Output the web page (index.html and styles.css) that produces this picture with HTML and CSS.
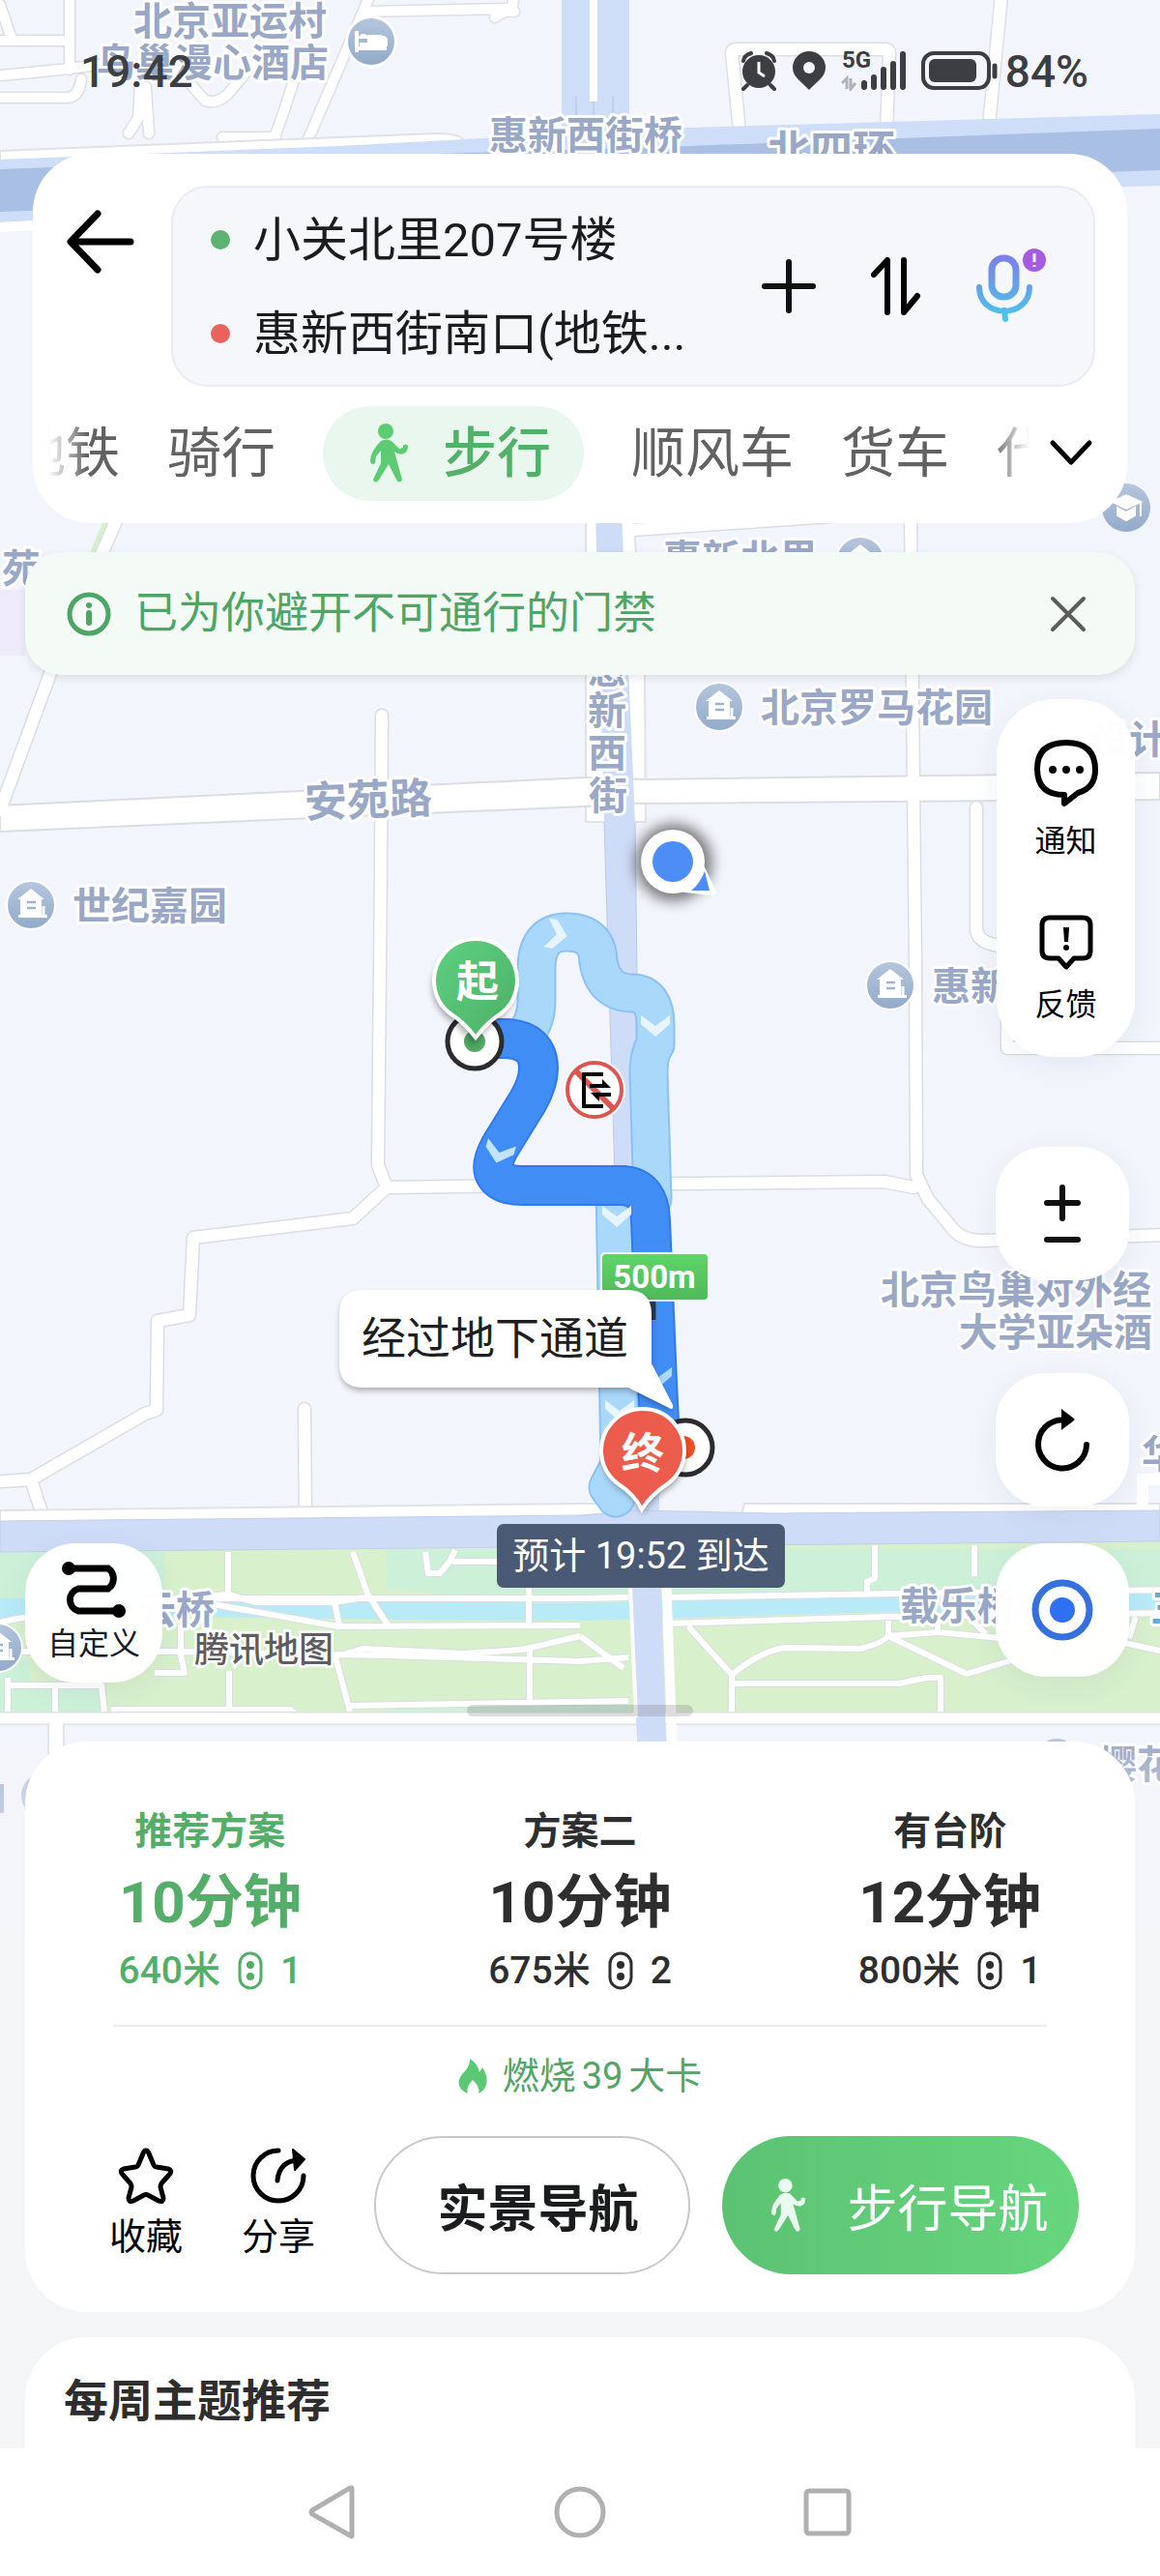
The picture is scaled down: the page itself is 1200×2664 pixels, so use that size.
FILE: index.html
```html
<!DOCTYPE html>
<html lang="zh-CN">
<head>
<meta charset="utf-8">
<meta name="viewport" content="width=device-width, initial-scale=1">
<title>步行导航</title>
<link rel="stylesheet" href="styles.css">
</head>
<body>
<div class="screen">

<svg class="map" viewBox="0 0 1200 2000" preserveAspectRatio="xMidYMin slice" role="img" aria-label="地图">
  <defs>
    <linearGradient id="poi" x1="0" y1="0" x2="0" y2="1"><stop offset="0" stop-color="#b5c5dc"/><stop offset="1" stop-color="#93abc9"/></linearGradient>
    <linearGradient id="pinGreen" x1="0" y1="0" x2="1" y2="1"><stop offset="0" stop-color="#5fd080"/><stop offset="1" stop-color="#4bb067"/></linearGradient>
    <linearGradient id="sign" x1="0" y1="0" x2="0" y2="1"><stop offset="0" stop-color="#5fd568"/><stop offset="1" stop-color="#4fb95a"/></linearGradient>
    <linearGradient id="fade" x1="0" y1="0" x2="0" y2="1"><stop offset="0" stop-color="#f4f5f7" stop-opacity="0"/><stop offset="1" stop-color="#f4f5f7"/></linearGradient>
    <filter id="soft" x="-50%" y="-50%" width="200%" height="200%"><feGaussianBlur stdDeviation="7"/></filter>
    <filter id="soft2" x="-50%" y="-50%" width="200%" height="200%"><feGaussianBlur stdDeviation="3"/></filter>
    <g id="house">
      <circle r="26" fill="#fff"/><circle r="24" fill="url(#poi)"/>
      <path d="M0-17 14-6H11V10H17V13H-13V10H-11V-6H-14Z" fill="#fff"/>
      <path d="M-4-3H5M-4 3H5" stroke="#9fb2cd" stroke-width="2.500"/>
      <path d="M13 1V10" stroke="#fff" stroke-width="3"/>
    </g>
    <g id="chev"><path d="M-15-9 0 2 15-9V0L0 13-15 0Z"/></g>
    <g id="roads" fill="none" stroke-linecap="round" stroke-linejoin="round">
      <path d="M385-10 312 160M378 12 525 9Q532 8 531-5M512 18Q522 10 532 12"/>
      <path d="M0 42H72M72-5V72M0 78Q50 74 110 66M0 101H70Q82 100 84 82M0 5 12 40M145 88 143 122 133 138M151 90 154 138M182 70Q200 90 212 104Q224 108 235 98L262 66M305 80 292 120 284 142M230 142H285"/>
    </g>
    <g id="streets" fill="none" stroke-linecap="round" stroke-linejoin="round">
      <path d="M124 530 58 680 0 838M395 740 394 900 391 1205 400 1228 365 1260 200 1280 196 1360 163 1366 162 1458 150 1462 32 1530 45 1570M-10 1533 32 1530M400 1228 700 1224 915 1222 945 1228"/>
      <path d="M315 1457 316 1570M942 530 945 815 947 1000 948 1215 960 1240 985 1270Q995 1283 1015 1283L1210 1277M1010 835V960Q1010 975 1035 978M1042 1055V1084L1210 1084M655 548 860 534"/>
    </g>
    <g id="paths" fill="none" stroke-linejoin="round">
      <path d="M0 1678Q30 1670 60 1672L160 1655Q170 1654 186 1653L350 1682 600 1681M-5 1708H186L400 1712 600 1718 650 1714M170 1660 185 1664 187 1652 236 1649 265 1657 345 1657 376 1652M236 1605V1648M365 1605 380 1648 402 1682M346 1657 351 1680M440 1605 443 1627 455 1627 465 1615 471 1603M468 1615H520M547 1640V1680M187 1680V1712L191 1730H160M346 1710 362 1770M352 1712 375 1705 480 1710 540 1706 600 1692M237 1728V1770M362 1764 650 1759M548 1706V1764M8 1735V1770M8 1743H105L108 1770M57 1743V1770M115 1768 300 1768 308 1774"/>
      <path d="M186 1653 600 1653 650 1652M690 1652 930 1648 1210 1644M690 1679 920 1672 1210 1668M905 1598V1632L897 1636V1646M1008 1598V1630M712 1682 757 1732V1772M757 1732Q790 1705 815 1704L890 1705Q918 1698 919 1690V1676M919 1692 1000 1731 1050 1716M919 1692 970 1688 1035 1694M970 1675V1688M1008 1678 1020 1690M757 1741H930L958 1735H973V1772M1140 1694 1200 1707M1168 1694 1175 1672M600 1692 645 1725"/>
    </g>
    <path id="alternative" d="M538 1075Q555 1060 555 1035V1000Q556 964 586 964 618 964 619 994 624 1027 655 1027 678 1028 678 1060V1080Q671 1090 671 1110L675 1240M636 1226 641 1515 629 1538 637 1549"/>
    <path id="selected" d="M491 1074H524Q557 1076 557 1105 557 1120 546 1139L517 1186Q506 1206 513 1216 520 1226 540 1226H645Q672 1228 673 1262L680 1430 683 1490"/>
  </defs>

  <rect width="1200" height="2000" fill="#f2f5fb"/>
  <rect x="0" y="610" width="26" height="68" fill="#efebfb"/>

  <!-- upper district and ring road -->
  <use href="#roads" stroke="#dcdfe4" stroke-width="13"/><use href="#roads" stroke="#fff" stroke-width="10"/>
  <path d="M765 135 757 55Q757 50 765 51H915Q921 51 920 57L917 135M1036-5 1023 130" fill="none" stroke="#dcdfe4" stroke-width="15"/>
  <path d="M765 135 757 55Q757 50 765 51H915Q921 51 920 57L917 135M1036-5 1023 130" fill="none" stroke="#fff" stroke-width="12"/>
  <path d="M581 0H651V150H581Z" fill="#cfdef8"/><path d="M614 0V105" stroke="#fff" stroke-width="8"/><path d="M596 100V140M634 100V140M614 105V140" stroke="#b5cbf1" stroke-width="1.500"/>
  <path d="M0 156 300 144 450 138Q478 138 480 146V170H0Z" fill="#fff" stroke="#dfe2e6" stroke-width="2"/>
  <path d="M0 165 350 151 712 132 1200 118V192L0 230Z" fill="#cfdef8"/>
  <path d="M0 175 350 162 712 151 1200 133V176L0 219Z" fill="#a9bfe3"/>
  <path d="M0 235 34 233" stroke="#fff" stroke-width="10"/>

  <!-- streets -->
  <path d="M114 530 50 680" stroke="#d5f0cf" stroke-width="6"/>
  <use href="#streets" stroke="#dadee2" stroke-width="15"/>
  <path d="M606 530H655L667 700 668 850H606Z" fill="#fff" stroke="#dfe2e6" stroke-width="2"/>
  <path d="M0 833 606 804 670 806 1200 799V827L660 831 606 834 0 860Z" fill="#fff" stroke="#dadee2" stroke-width="2"/>
  <use href="#streets" stroke="#fff" stroke-width="12"/>
  <path d="M616 530H643L657 850 662 1250 682 1540V1600H648L625 850Z" fill="#cfdcf7"/>
  <path d="M625 850 637 1250M657 850 662 1250" stroke="#b9c9e4" stroke-width="1"/>

  <!-- southern road, park and canal -->
  <path d="M0 1562 600 1555 650 1555V1575H0ZM770 1555H1200V1575H765Z" fill="#fff" stroke="#dfe2e6" stroke-width="2"/>
  <path d="M1182 1565V1530H1210" fill="none" stroke="#fff" stroke-width="12"/>
  <path d="M0 1602 1200 1594V1776H0Z" fill="#d8f0cc"/>
  <path d="M0 1602H170V1650L0 1668ZM400 1602H1200V1644L690 1650H470L400 1642ZM0 1715H30V1742H110V1776H0ZM400 1764H650V1776H400Z" fill="#ccf0d8"/>
  <path d="M0 1653 170 1654 350 1656 600 1658 920 1648 1200 1643V1664L920 1667 600 1676 420 1675 190 1672 0 1674Z" fill="#b8eaf8"/>
  <use href="#paths" stroke="#dcdde3" stroke-width="8"/><use href="#paths" stroke="#fff" stroke-width="6"/>
  <path d="M0 1573 600 1567 660 1562 800 1565 1200 1562V1594L0 1605Z" fill="#cfdcf7" stroke="#c3cfe6" stroke-width="1"/>
  <path d="M0 1777H1200" stroke="#dfe0e4" stroke-width="14"/><path d="M0 1777H1200" stroke="#fff" stroke-width="11"/>
  <path d="M58 1782V1830" stroke="#fff" stroke-width="14"/><path d="M50 1783V1830M66 1783V1830" stroke="#dcdfe4" stroke-width="1.500"/>
  <path d="M650 1600H682L690 1820H660Z" fill="#cfdcf7"/>
  <path d="M688 1600 696 1820" stroke="#fff" stroke-width="10"/><path d="M652 1640 658 1776" stroke="#fff" stroke-width="4"/>

  <!-- place labels -->
  <g class="places">
    <text x="138" y="36">北京亚运村</text><text x="100" y="79">鸟巢漫心酒店</text>
    <text x="506" y="154">惠新西街桥</text><text class="large" x="794" y="172">北四环</text>
    <text x="2" y="602">苑</text><text x="686" y="592">惠新北里</text>
    <text x="608" y="706">惠</text><text x="608" y="749">新</text><text x="608" y="793">西</text><text x="609" y="837">街</text>
    <text x="787" y="746">北京罗马花园</text><text x="1128" y="779">设计</text>
    <text class="large" x="315" y="843" transform="rotate(-2 380 828)">安苑路</text>
    <text x="75" y="951">世纪嘉园</text><text x="964" y="1034">惠新</text>
    <text x="911" y="1348">北京鸟巢对外经</text><text x="992" y="1392">大学亚朵酒</text>
    <text x="1181" y="1518">华</text><text x="142" y="1679">云桥</text><text x="931" y="1675">载乐桥</text>
    <text class="water" x="1190" y="1677">三</text>
    <text x="1136" y="1839">樱花</text>
  </g>
  <g transform="translate(384 43)"><circle r="27" fill="#fff"/><circle r="24" fill="url(#poi)"/><path d="M-15-11V11M-15 7H16M-11-3A3 3 0 1 1-5-3M-12 3H15V-2Q15-5 4-5H-2V3" fill="#fff" stroke="#fff" stroke-width="4"/></g>
  <g transform="translate(1165 525)"><circle r="25" fill="url(#poi)"/><path d="M-14-6 0-13 15-6 0 1ZM-9 0 0 5 9 0V8L0 13-9 8ZM15-5V9" fill="#fff" stroke="#fff" stroke-width="2"/></g>
  <use href="#house" x="890" y="580"/><use href="#house" x="744" y="731"/><use href="#house" x="32" y="936"/><use href="#house" x="921" y="1019"/>
  <use href="#house" x="-2" y="1704"/><circle cx="1093" cy="1819" r="21" fill="#b5c2dc"/><circle cx="45" cy="1857" r="23" fill="#b5c2dc"/><path d="M0 1845H4V1875H0" fill="#a6b4d2"/>
  <rect y="1790" width="1200" height="210" fill="url(#fade)"/>

  <!-- current position -->
  <circle cx="697" cy="892" r="40" fill="#000" opacity=".5" filter="url(#soft)"/>
  <path d="M728 895 741 922Q742 926 737 926L700 922Z" fill="#fff"/>
  <circle cx="696" cy="891" r="33" fill="#fff"/><circle cx="696" cy="891" r="21" fill="#4d8df6"/><path d="M729 901 734 921H715Q724 914 729 901Z" fill="#4d8df6"/>

  <!-- alternative and selected routes -->
  <g fill="none" stroke-linecap="round" stroke-linejoin="round">
    <use href="#alternative" stroke="#8dc1f5" stroke-width="41"/><use href="#alternative" stroke="#a9d8fa" stroke-width="37"/>
    <use href="#selected" stroke="#3379ee" stroke-width="42"/><use href="#selected" stroke="#418df6" stroke-width="38"/>
  </g>
  <g fill="#e9f5fe">
    <use href="#chev" transform="translate(574 966) rotate(-80)"/><use href="#chev" transform="translate(678 1059)"/><use href="#chev" transform="translate(638 1256)"/><use href="#chev" transform="translate(641 1457)"/>
    <use href="#chev" fill="#c2e4fc" transform="translate(517 1190) rotate(16)"/><use href="#chev" fill="#a9d8fa" transform="translate(680 1423)"/>
  </g>

  <circle cx="491" cy="1077" r="28" fill="#fff" stroke="#2c2c2e" stroke-width="5"/><circle cx="491" cy="1077" r="11" fill="#51a963"/>
  <circle cx="709" cy="1497" r="28" fill="#fff" stroke="#2c2c2e" stroke-width="5"/><circle cx="707" cy="1497" r="12" fill="#ea4f25"/>
  <circle cx="615" cy="1127" r="32" fill="#fff"/><circle cx="615" cy="1127" r="28" fill="#fff" stroke="#df5450" stroke-width="4"/><path d="M596 1108 634 1146" stroke="#df5450" stroke-width="6"/>
  <path d="M624 1111H604V1144H624" fill="none" stroke="#000" stroke-width="4"/><path d="M610 1121H623V1116L632 1125H610ZM632 1130H611L620 1139V1134H632Z"/>

  <!-- distance sign -->
  <path d="M675 1340V1365" stroke="#27384f" stroke-width="7"/><path d="M685 1361H724" stroke="#000" stroke-width="7" opacity=".25" filter="url(#soft2)"/>
  <rect x="621" y="1295" width="112" height="51" rx="5" fill="#eafcec"/><rect x="623" y="1297" width="109" height="47" rx="4" fill="url(#sign)"/>
  <text class="sign-text" x="677" y="1332">500m</text>

  <!-- underpass note -->
  <path d="M376 1338H648Q674 1338 674 1360V1415L696 1460 650 1438H376Q352 1438 352 1414V1362Q352 1338 376 1338Z" opacity=".3" filter="url(#soft2)"/>
  <path d="M375 1334H649Q674 1334 674 1359V1410L696 1453Q697 1459 692 1456L650 1435H375Q351 1435 351 1410V1359Q351 1334 375 1334Z" fill="#fff"/>
  <text class="note" x="512" y="1400">经过地下通道</text>

  <!-- start and finish pins -->
  <path d="M492 1076C486 1068 478 1058 467 1050A43 43 0 1 1 517 1050C506 1058 498 1068 492 1076Z" opacity=".3" transform="translate(-2 5)" filter="url(#soft2)"/>
  <path d="M492 1073C486 1065 478 1056 467 1049A43 43 0 1 1 517 1049C506 1056 498 1065 492 1073Z" fill="url(#pinGreen)" stroke="#fff" stroke-width="4"/>
  <text class="pin-text" x="494" y="1031">起</text>
  <path d="M664 1562C659 1552 651 1543 640 1536A43 43 0 1 1 690 1536C679 1543 670 1552 664 1562Z" opacity=".35" transform="translate(1 4)" filter="url(#soft2)"/>
  <path d="M664 1561C659 1551 651 1542 640 1535A43 43 0 1 1 690 1535C679 1542 670 1551 664 1561Z" fill="#eb5c4d" stroke="#fff" stroke-width="4"/>
  <text class="pin-text" x="665" y="1519">终</text>

  <rect x="514" y="1576" width="298" height="66" rx="7" fill="#4a5974"/>
  <text class="eta" x="663" y="1622">预计 19:52 到达</text>
</svg>

<header class="status">
  <time>19:42</time>
  <div class="status-icons">
    <svg width="38" height="42" viewBox="0 0 38 42" fill="#3c3e42"><circle cx="19" cy="22" r="17"/><path d="M3 11Q4 5 11 3M27 3Q34 5 35 11M7 36 3 40M31 36 35 40" fill="none" stroke="#3c3e42" stroke-width="4" stroke-linecap="round"/><path d="M19 12V23L25 27" fill="none" stroke="#fff" stroke-width="3"/></svg>
    <svg width="36" height="42" viewBox="0 0 36 42"><path d="M18 1A17 17 0 0 1 35 18C35 28 25 33 18 41 11 33 1 28 1 18A17 17 0 0 1 18 1Z" fill="#3c3e42"/><circle cx="18" cy="18" r="6" fill="#f2f5fb"/></svg>
    <svg width="68" height="42" viewBox="0 0 68 42"><text class="signal" x="1" y="18">5G</text><g stroke="#3c3e42" stroke-width="6" stroke-linecap="round"><path d="M24 34V38M34 28V38M44 20V38M54 14V38M64 4V38"/></g><path d="M1 34 6 29V40M10 29V40L15 34" fill="none" stroke="#aeb2b8" stroke-width="3"/></svg>
    <svg width="80" height="42" viewBox="0 0 80 42"><rect x="2" y="3" width="68" height="36" rx="11" fill="none" stroke="#3c3e42" stroke-width="4"/><rect x="8" y="9" width="49" height="24" rx="6" fill="#3c3e42"/><path d="M76 16V27" stroke="#3c3e42" stroke-width="5" stroke-linecap="round"/></svg>
    <span>84%</span>
  </div>
</header>

<section class="search-card">
  <div class="search-row">
    <button class="back" aria-label="返回"><svg width="70" height="66" viewBox="0 0 70 66"><path d="M32 4 4 33 32 62M5 33H66" fill="none" stroke="#000" stroke-width="7" stroke-linecap="round" stroke-linejoin="round"/></svg></button>
    <div class="route-box">
      <div class="fields">
        <label class="field"><i class="dot start"></i><input aria-label="起点" value="小关北里207号楼"></label>
        <label class="field"><i class="dot end"></i><input aria-label="终点" value="惠新西街南口(地铁..."></label>
      </div>
      <div class="tools">
        <button aria-label="添加途经点"><svg width="58" height="72" viewBox="0 0 58 72"><path d="M4 36H54M29 11V61" stroke="#111" stroke-width="6" stroke-linecap="round"/></svg></button>
        <button aria-label="交换起终点"><svg width="52" height="72" viewBox="0 0 52 72"><path d="M3 24 17 9V63M34 9V63L48 46" fill="none" stroke="#000" stroke-width="6" stroke-linecap="round" stroke-linejoin="round"/></svg></button>
        <button aria-label="语音输入"><svg width="76" height="80" viewBox="0 0 76 80"><defs><linearGradient id="mic" gradientUnits="userSpaceOnUse" x1="30" y1="8" x2="30" y2="76"><stop offset="0" stop-color="#7f7fea"/><stop offset="1" stop-color="#48c8ea"/></linearGradient></defs><rect x="17" y="11" width="25" height="40" rx="12" fill="none" stroke="url(#mic)" stroke-width="7"/><path d="M4 41C4 74 56 74 56 41M30 65 31 74" fill="none" stroke="url(#mic)" stroke-width="6" stroke-linecap="round"/><circle cx="61" cy="13" r="12" fill="#a65ce0"/><path d="M61 6V15M61 18V20" stroke="#fff" stroke-width="3"/></svg></button>
      </div>
    </div>
  </div>
  <nav class="modes" aria-label="出行方式">
    <div class="mode-scroller"><div class="mode-list">
      <button>地铁</button><button>骑行</button>
      <button class="active" aria-current="true"><svg width="42" height="62" viewBox="0 0 42 62"><use href="#walker"/></svg>步行</button>
      <button>顺风车</button><button>货车</button><button>代驾</button>
    </div></div>
    <button class="more" aria-label="更多"><svg width="46" height="30" viewBox="0 0 46 30"><path d="M4 4 23 24 42 4" fill="none" stroke="#000" stroke-width="5" stroke-linecap="round" stroke-linejoin="round"/></svg></button>
  </nav>
</section>

<svg class="sprite" aria-hidden="true"><symbol id="walker" viewBox="0 0 42 62"><circle cx="17" cy="8" r="8"/><path d="M12 18Q20 14 25 20L31 26 35 25V23Q37 20 40 23 40 29 36 31 31 33 26 29L29 40 34 58Q31 63 28 58L20 42 10 58Q6 63 4 58L12 41V28L7 34 6 41Q2 44 1 39 1 29 12 18Z"/></symbol></svg>

<section class="toast" role="status">
  <svg width="46" height="46" viewBox="0 0 46 46"><circle cx="23" cy="23" r="20" fill="none" stroke="#4da566" stroke-width="5"/><circle cx="23" cy="14" r="3" fill="#4da566"/><path d="M23 22V32" stroke="#4da566" stroke-width="6" stroke-linecap="round"/></svg>
  <p>已为你避开不可通行的门禁</p>
  <button aria-label="关闭"><svg width="38" height="38" viewBox="0 0 38 38"><path d="M3 3 35 35M35 3 3 35" stroke="#5a5d5b" stroke-width="4" stroke-linecap="round"/></svg></button>
</section>

<main class="controls">
  <div class="left-tools">
    <button class="tile custom"><svg width="68" height="60" viewBox="0 0 68 60"><path d="M10 8H49A13 13 0 0 1 49 29H18A12 12 0 0 0 18 52H58" fill="none" stroke="#000" stroke-width="7"/><circle cx="8" cy="8" r="7"/><circle cx="60" cy="52" r="7"/></svg><span>自定义</span></button>
    <span class="brand">腾讯地图</span>
  </div>
  <div class="right-tools">
    <div class="panel">
      <button><svg width="68" height="72" viewBox="0 0 68 72"><path d="M34 4Q64 4 64 32 64 51 46 56L32 67V58Q4 58 4 31 4 4 34 4Z" fill="none" stroke="#000" stroke-width="6" stroke-linejoin="round"/><circle cx="20" cy="32" r="4"/><circle cx="34" cy="32" r="4"/><circle cx="48" cy="32" r="4"/></svg><span>通知</span></button>
      <button><svg width="60" height="60" viewBox="0 0 60 60"><path d="M13 4H47Q55 4 55 12V38Q55 46 47 46H38L30 55 22 46H13Q5 46 5 38V12Q5 4 13 4Z" fill="none" stroke="#000" stroke-width="5" stroke-linejoin="round"/><path d="M27 14H33L32 29H28Z"/><circle cx="30" cy="35" r="3"/></svg><span>反馈</span></button>
    </div>
    <button class="tile zoom" aria-label="缩放"><svg width="44" height="66" viewBox="0 0 44 66"><path d="M6 22H38M22 6V38M6 60H38" stroke="#111" stroke-width="6" stroke-linecap="round"/></svg></button>
    <button class="tile refresh" aria-label="刷新"><svg width="62" height="72" viewBox="0 0 62 72"><path d="M36 16A25 25 0 1 0 56 41" fill="none" stroke="#000" stroke-width="6" stroke-linecap="round"/><path d="M30 4 43 14Q44 15 43 16L30 26Z"/></svg></button>
    <button class="tile" aria-label="定位"><svg width="66" height="66" viewBox="0 0 66 66"><circle cx="33" cy="33" r="28" fill="none" stroke="#3670df" stroke-width="7"/><circle cx="33" cy="33" r="13" fill="#2f6ff2"/></svg></button>
  </div>
</main>

<div class="handle"></div>

<section class="sheet">
  <div class="plans">
    <button class="plan chosen"><span class="plan-name">推荐方案</span><strong>10分钟</strong><span class="plan-meta">640米<svg width="26" height="40" viewBox="0 0 26 40"><rect x="2" y="2" width="22" height="36" rx="11" fill="none" stroke="currentColor" stroke-width="3"/><circle cx="13" cy="14" r="4"/><circle cx="13" cy="26" r="4"/></svg>1</span></button>
    <button class="plan"><span class="plan-name">方案二</span><strong>10分钟</strong><span class="plan-meta">675米<svg width="26" height="40" viewBox="0 0 26 40"><rect x="2" y="2" width="22" height="36" rx="11" fill="none" stroke="currentColor" stroke-width="3"/><circle cx="13" cy="14" r="4"/><circle cx="13" cy="26" r="4"/></svg>2</span></button>
    <button class="plan"><span class="plan-name">有台阶</span><strong>12分钟</strong><span class="plan-meta">800米<svg width="26" height="40" viewBox="0 0 26 40"><rect x="2" y="2" width="22" height="36" rx="11" fill="none" stroke="currentColor" stroke-width="3"/><circle cx="13" cy="14" r="4"/><circle cx="13" cy="26" r="4"/></svg>1</span></button>
  </div>
  <hr>
  <p class="calories"><svg width="30" height="38" viewBox="0 0 30 38"><path d="M12 1C19 6 21 10 22 15L25 10C33 22 30 33 21 37 23 32 19 27 15 23 11 27 8 32 10 37 -2 33-1 22 5 16 9 12 12 8 12 1Z" fill="#5cc774"/></svg><span>燃烧<b>39</b>大卡</span></p>
  <div class="actions">
    <button class="small-action"><svg width="60" height="60" viewBox="0 0 60 60"><path d="M30 4Q32 4 33 7L38 19Q39 21 41 21L53 23Q58 25 54 29L46 38Q45 40 45 42L48 53Q48 58 43 56L32 50Q30 49 28 50L17 56Q12 58 12 53L15 42Q15 40 14 38L6 29Q2 25 7 23L19 21Q21 21 22 19L27 7Q28 4 30 4Z" fill="none" stroke="#000" stroke-width="5"/></svg><span>收藏</span></button>
    <button class="small-action"><svg width="60" height="60" viewBox="0 0 60 60"><path d="M30 4A26 26 0 1 0 56 30M29 35C30 22 38 14 51 14" fill="none" stroke="#000" stroke-width="5" stroke-linecap="round"/><path d="M45 3 57 13 47 24Z" stroke="#000" stroke-width="2" stroke-linejoin="round"/></svg><span>分享</span></button>
    <button class="live">实景导航</button>
    <button class="go"><svg width="38" height="58" viewBox="0 0 42 62"><use href="#walker"/></svg>步行导航</button>
  </div>
</section>

<section class="weekly"><h2>每周主题推荐</h2></section>

<nav class="system-nav" aria-label="系统导航">
  <button aria-label="后退"><svg width="54" height="60" viewBox="0 0 54 60"><path d="M47 6V54Q47 56 45 54L6 32Q4 30 6 28L45 5Q47 4 47 6Z"/></svg></button>
  <button aria-label="主页"><svg width="54" height="60" viewBox="0 0 54 60"><circle cx="27" cy="30" r="24"/></svg></button>
  <button aria-label="最近任务"><svg width="54" height="60" viewBox="0 0 54 60"><rect x="5" y="8" width="44" height="44" rx="3"/></svg></button>
</nav>
</div>
</body>
</html>
```

FILE: styles.css
```css
* { box-sizing: border-box; }

body {
  margin: 0;
  background: #f4f5f7;
  color: #1b1c1e;
  font-family: Roboto, "Noto Sans CJK SC", sans-serif;
}

button, input {
  margin: 0;
  padding: 0;
  border: 0;
  background: none;
  color: inherit;
  font: inherit;
}

svg { display: block; flex: none; }
p, h2 { margin: 0; }

.screen {
  position: relative;
  display: flex;
  flex-direction: column;
  min-height: 100vh;
  overflow: hidden;
}

/* The map lies behind all the floating controls. */
.map {
  position: absolute;
  top: 0;
  left: 0;
  width: 100%;
  height: 2000px;
}

.screen > :not(.map) { position: relative; }
.screen > .sprite { position: absolute; width: 0; height: 0; }

.places text {
  fill: #9aa8c6;
  stroke: #fff;
  stroke-width: 6px;
  stroke-linejoin: round;
  paint-order: stroke;
  font-family: "Noto Sans CJK SC", sans-serif;
  font-size: 40px;
  font-weight: 700;
}
.places .large { font-size: 44px; }
.places .water { fill: #6aa9cc; }

.sign-text, .note, .pin-text, .eta { text-anchor: middle; }
.sign-text { fill: #fff; font-size: 33px; font-weight: 700; }
.note { fill: #1f1f1f; font-size: 46px; }
.pin-text { fill: #fff; font-size: 44px; font-weight: 700; }
.eta { fill: #fff; font-size: 38px; }
.signal { fill: #3c3e42; font-size: 24px; font-weight: 700; }

/* Status bar */
.status {
  display: flex;
  justify-content: space-between;
  height: 159px;
  padding: 46px 74px 0 83px;
  color: #3c3e42;
  font-size: 46px;
  font-weight: 500;
  line-height: 56px;
}
.status-icons { display: flex; align-items: flex-start; gap: 15px; }
.status-icons svg { margin-top: 6px; }
.status-icons span { margin-left: -8px; }

/* Search card */
.search-card {
  margin: 0 34px;
  padding: 33px 33px 23px 35px;
  border-radius: 60px;
  background: #fff;
}
.search-row { display: flex; align-items: flex-start; gap: 38px; }
.back { padding-top: 25px; }
.route-box {
  flex: 1;
  display: flex;
  align-items: center;
  justify-content: space-between;
  min-width: 0;
  padding: 5px 46px 5px 39px;
  border: 2px solid #e9ecf4;
  border-radius: 38px;
  background: #f5f7fb;
}
.fields { flex: 1; min-width: 0; }
.field { display: flex; align-items: center; gap: 24px; height: 97px; }
.field input {
  flex: 1;
  min-width: 0;
  height: 72px;
  padding-bottom: 8px;
  font-size: 49px;
}
.dot { width: 20px; height: 20px; border-radius: 50%; }
.dot.start { background: #5cb270; }
.dot.end { background: #e9635c; }
.tools { display: flex; align-items: center; gap: 56px; }

.modes { display: flex; align-items: center; margin-top: 20px; }
.mode-scroller {
  flex: 1;
  min-width: 0;
  overflow: hidden;
  margin-left: -19px;
  mask-image: linear-gradient(90deg, transparent, #000 40px, #000 calc(100% - 40px), transparent);
}
.mode-list {
  display: flex;
  align-items: center;
  gap: 49px;
  width: max-content;
  margin-left: -38px;
  color: #626262;
  font-size: 56px;
  line-height: 98px;
}
.mode-list .active {
  display: flex;
  align-items: center;
  gap: 34px;
  padding: 0 34px 0 48px;
  border-radius: 49px;
  background: #e9f7ef;
  color: #52b068;
  font-weight: 500;
}
.mode-list .active svg { fill: #5ccb74; }
.more { margin: 0 2px 0 20px; }

/* Notice */
.toast {
  display: flex;
  align-items: center;
  margin: 30px 26px 0;
  padding: 0 50px 0 43px;
  border-radius: 38px;
  background: #f4faf6;
  box-shadow: 0 3px 8px rgba(40, 70, 60, .12);
  color: #4da566;
  font-size: 45px;
  line-height: 127px;
}
.toast p { flex: 1; padding-left: 24px; }

/* Floating map controls */
.controls {
  display: flex;
  justify-content: space-between;
  padding: 25px 26px 0;
}
.left-tools { display: flex; align-items: flex-end; align-self: flex-end; gap: 33px; }
.right-tools { display: flex; flex-direction: column; align-items: flex-end; padding-bottom: 6px; }
.tile, .panel { background: rgba(255, 255, 255, .98); box-shadow: 0 8px 30px rgba(60, 90, 130, .08); }
.tile {
  display: flex;
  flex-direction: column;
  align-items: center;
  justify-content: center;
  width: 138px;
  height: 138px;
  margin-right: 6px;
  border-radius: 52px;
}
.tile.custom { width: 142px; height: 144px; margin: 0; }
.custom span { font-size: 32px; line-height: 44px; padding-top: 4px; }
.brand {
  padding-bottom: 11px;
  color: #5c5e62;
  font-size: 36px;
  font-weight: 500;
  line-height: 44px;
  -webkit-text-stroke: 5px #fff;
  paint-order: stroke;
}
.panel {
  display: flex;
  flex-direction: column;
  gap: 53px;
  width: 143px;
  padding: 41px 0 32px;
  border-radius: 60px;
}
.panel button {
  display: flex;
  flex-direction: column;
  align-items: center;
  color: #000;
  font-size: 32px;
  line-height: 44px;
}
.panel button span { padding-top: 12px; }
.tile.zoom { margin-top: 93px; }
.tile.refresh { margin-top: 96px; margin-bottom: 38px; }

.handle {
  align-self: center;
  width: 234px;
  height: 12px;
  margin: 23px 0 26px;
  border-radius: 6px;
  background: rgba(90, 80, 90, .2);
}

/* Route sheet */
.sheet {
  margin: 0 26px;
  padding: 65px 0 39px;
  border-radius: 64px;
  background: #fff;
}
.plans { display: grid; grid-template-columns: repeat(3, 1fr); }
.plan { display: flex; flex-direction: column; align-items: center; color: #2e2e2e; fill: currentColor; }
.plan.chosen { color: #54ae69; }
.plan-name { font-size: 39px; font-weight: 700; line-height: 56px; }
.plan strong { font-size: 60px; font-weight: 700; line-height: 92px; }
.plan-meta { display: flex; align-items: center; gap: 18px; font-size: 39px; font-weight: 500; line-height: 48px; }
.sheet hr { height: 2px; margin: 32px 91px 27px; border: 0; background: #ebebeb; }
.calories {
  display: flex;
  justify-content: center;
  align-items: center;
  gap: 16px;
  color: #54a468;
  font-size: 38px;
  line-height: 48px;
}
.calories b { padding: 0 6px; font-weight: 400; }
.actions { display: flex; align-items: center; margin-top: 38px; padding: 0 58px 0 87px; }
.small-action {
  display: flex;
  flex-direction: column;
  align-items: center;
  gap: 5px;
  margin-right: 61px;
  color: #000;
  font-size: 38px;
  line-height: 56px;
}
.live, .go { height: 143px; border-radius: 72px; font-size: 52px; }
.live {
  flex: 328;
  margin-right: 33px;
  padding-left: 12px;
  border: 2px solid #c8c8c8;
  font-weight: 700;
}
.go {
  flex: 370;
  display: flex;
  align-items: center;
  justify-content: center;
  gap: 42px;
  padding-left: 18px;
  background: linear-gradient(90deg, #5cc273, #67d57e);
  color: #fff;
}
.go svg { fill: #e9fbf0; }

.weekly {
  margin: 26px 26px 0;
  padding: 34px 40px 17px;
  border-radius: 64px 64px 0 0;
  background: #fff;
}
.weekly h2 { color: #2e2e2e; font-size: 46px; font-weight: 700; line-height: 64px; }

.system-nav {
  flex: 1;
  display: flex;
  justify-content: center;
  align-items: center;
  gap: 202px;
  min-height: 130px;
  background: #fff;
}
.system-nav svg { fill: none; stroke: #b0b0b0; stroke-width: 5px; }
```
